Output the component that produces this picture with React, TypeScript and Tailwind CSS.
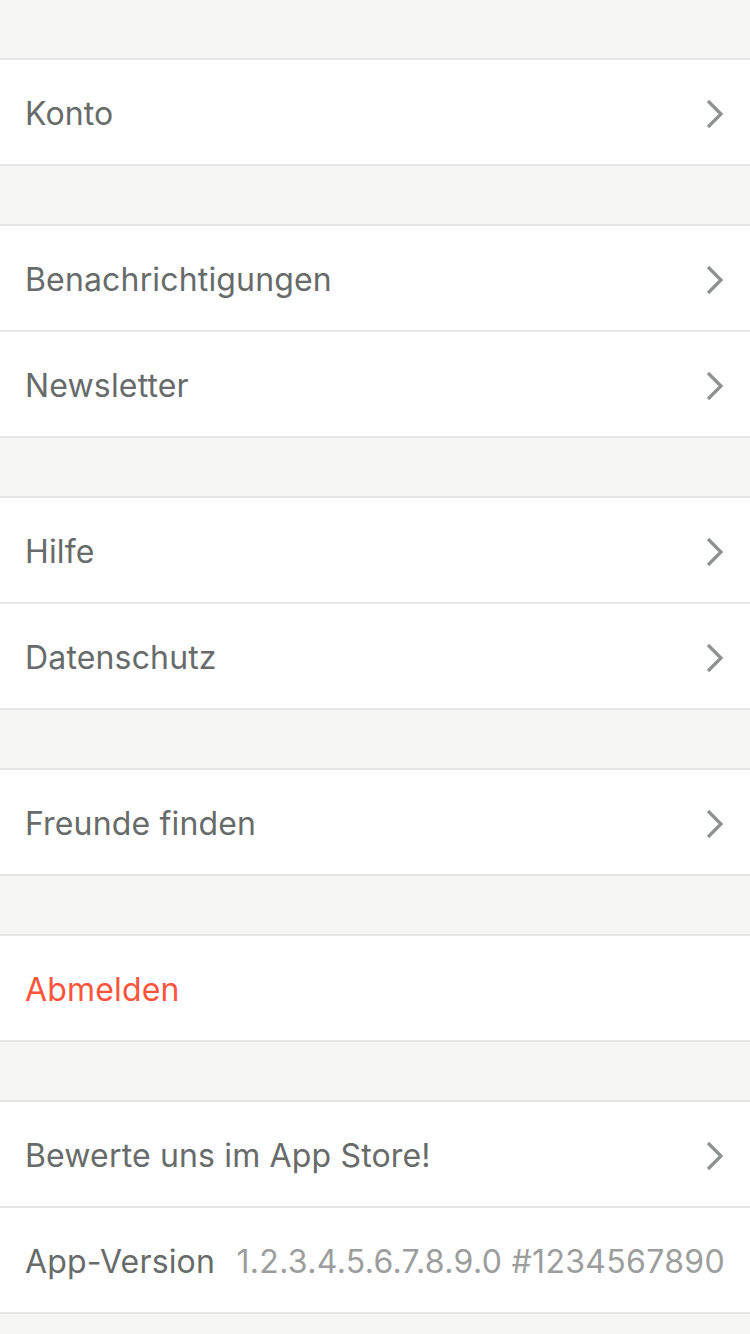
type Row = { label: string; value?: string; danger?: boolean; chevron?: boolean }

const sections: Row[][] = [
  [{ label: 'Konto', chevron: true }],
  [
    { label: 'Benachrichtigungen', chevron: true },
    { label: 'Newsletter', chevron: true },
  ],
  [
    { label: 'Hilfe', chevron: true },
    { label: 'Datenschutz', chevron: true },
  ],
  [{ label: 'Freunde finden', chevron: true }],
  [{ label: 'Abmelden', danger: true }],
  [
    { label: 'Bewerte uns im App Store!', chevron: true },
    { label: 'App-Version', value: '1.2.3.4.5.6.7.8.9.0 #1234567890' },
  ],
]

// iOS-artiger Disclosure-Pfeil
function Chevron() {
  return (
    <svg width="18" height="30" viewBox="0 0 18 30" fill="none" className="shrink-0">
      <polyline points="2,2 15,15 2,28" stroke="#8e9190" strokeWidth="3.2" strokeLinejoin="miter" />
    </svg>
  )
}

function SettingsRow({ row }: { row: Row }) {
  return (
    <div className="flex h-[104px] items-center justify-between pl-[25px] pr-[26px] pt-[3px]">
      <span className={`tracking-[0.005em] ${row.danger ? 'text-[#fe533d]' : 'text-[#676b69]'}`}>{row.label}</span>
      {row.value && <span className="mr-[-1px] tracking-[0.01em] text-[#9c9e9d]">{row.value}</span>}
      {row.chevron && <Chevron />}
    </div>
  )
}

export default function App() {
  return (
    <div
      className="min-h-[1334px] bg-[#f6f6f4] pt-[58px] text-[32px]"
      style={{ fontFamily: 'Inter, "Noto Sans", sans-serif' }}
    >
      {sections.map((rows, i) => (
        <div key={i} className="mb-[58px] border-y-2 border-[#e6e6e6] bg-white">
          {rows.map((row, j) => (
            <div key={row.label} className={j > 0 ? 'border-t-2 border-[#e6e6e6]' : ''}>
              <SettingsRow row={row} />
            </div>
          ))}
        </div>
      ))}
    </div>
  )
}
